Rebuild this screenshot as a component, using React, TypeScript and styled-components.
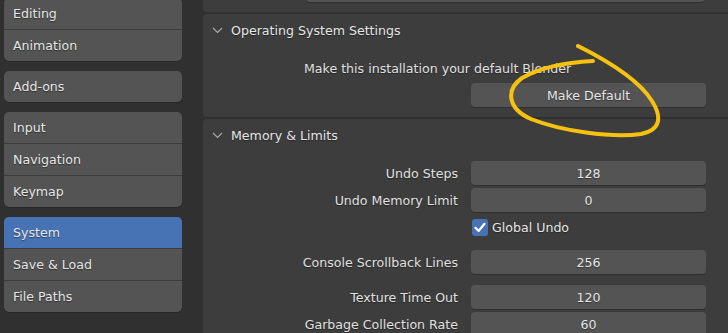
import React, { FC } from 'react';
import styled, { createGlobalStyle } from 'styled-components';

const GlobalStyle = createGlobalStyle`
  html, body {
    margin: 0;
    padding: 0;
    background: #303030;
  }
  body {
    color: #e6e6e6;
    font-family: "DejaVu Sans", "Noto Sans", sans-serif;
    font-size: 12.6px;
  }
`;

const Window = styled.div`
  display: flex;
  height: 333px;
  overflow: hidden;
  position: relative;
  width: 728px;
`;

const Sidebar = styled.nav`
  box-sizing: border-box;
  display: flex;
  flex: 0 0 203px;
  flex-direction: column;
  gap: 10px;
  padding: 0 21px 0 4px;
`;

const Group = styled.div<{ $first?: boolean }>`
  background: #545454;
  border-radius: 5px;
  box-shadow: 0 1px 0 rgba(0, 0, 0, 0.2);
  margin-top: ${(p) => (p.$first ? '-2px' : '0')};
  overflow: hidden;
`;

const NavItem = styled.div<{ $active?: boolean }>`
  align-items: center;
  background: ${(p) => (p.$active ? '#4772b3' : 'transparent')};
  display: flex;
  height: 31px;
  padding-left: 9px;
  text-shadow: 0 1px 1px rgba(0, 0, 0, 0.45);

  & + & {
    border-top: 1px solid #3d3d3d;
  }
`;

const Main = styled.main`
  display: flex;
  flex: 1;
  flex-direction: column;
  gap: 2px;
  min-width: 0;
`;

const Panel = styled.section<{ $stub?: boolean }>`
  background: #3d3d3d;
  border-radius: 4px 0 0 4px;
  margin-right: -8px;
  margin-top: ${(p) => (p.$stub ? '-30px' : '0')};
  padding-bottom: 10px;
  padding-top: ${(p) => (p.$stub ? '8px' : '0')};
`;

const Header = styled.div`
  align-items: center;
  display: flex;
  height: 32px;
  padding-left: 9px;
  text-shadow: 0 1px 1px rgba(0, 0, 0, 0.4);

  svg {
    margin-right: 8px;
  }
`;

const Body = styled.div`
  padding-top: 7px;
`;

const Row = styled.div<{ $spaced?: boolean }>`
  align-items: center;
  column-gap: 13px;
  display: grid;
  grid-template-columns: 255px 235px;
  height: 24px;
  margin-top: ${(p) => (p.$spaced ? '11px' : '3px')};
`;

const Label = styled.span`
  color: #e0e0e0;
  text-align: right;
  text-shadow: 0 1px 1px rgba(0, 0, 0, 0.4);
  white-space: nowrap;
`;

const Note = styled.div`
  align-items: center;
  color: #e0e0e0;
  display: flex;
  height: 24px;
  margin-top: 3px;
  padding-left: 101px;
  text-shadow: 0 1px 1px rgba(0, 0, 0, 0.4);
  white-space: nowrap;
`;

const Field = styled.div`
  align-items: center;
  background: #545454;
  border-radius: 4px;
  box-shadow: 0 1px 0 rgba(0, 0, 0, 0.22);
  display: flex;
  height: 24px;
  justify-content: center;
  text-shadow: 0 1px 1px rgba(0, 0, 0, 0.4);
`;

const WideField = styled(Field)`
  margin-left: 103px;
  width: 399px;
`;

const CheckLine = styled.label`
  align-items: center;
  display: flex;
  gap: 4px;
  padding-left: 1px;
  text-shadow: 0 1px 1px rgba(0, 0, 0, 0.4);
`;

const Box = styled.span`
  align-items: center;
  background: #4772b3;
  border-radius: 3px;
  display: inline-flex;
  height: 17px;
  justify-content: center;
  width: 16px;
`;

const Scribble = styled.svg`
  left: 0;
  pointer-events: none;
  position: absolute;
  top: 0;
`;

const Chevron: FC = () => (
  <svg width="11" height="7" viewBox="0 0 11 7">
    <path d="M1 1 L5.5 5.5 L10 1" fill="none" stroke="#a8a8a8" strokeWidth="1.2" />
  </svg>
);

const Check: FC = () => (
  <svg width="12" height="11" viewBox="0 0 12 11">
    <path d="M1.5 5.8 L4.6 9 L10.5 1.8" fill="none" stroke="#fff" strokeWidth="2.2" strokeLinecap="round" strokeLinejoin="round" />
  </svg>
);

const groups = [
  [{ name: 'Editing' }, { name: 'Animation' }],
  [{ name: 'Add-ons' }],
  [{ name: 'Input' }, { name: 'Navigation' }, { name: 'Keymap' }],
  [{ name: 'System', active: true }, { name: 'Save & Load' }, { name: 'File Paths' }],
];

const App: FC = () => {
  return (
    <>
      <GlobalStyle />
      <Window>
        <Sidebar>
          {groups.map((g, i) => (
            <Group key={i} $first={i === 0}>
              {g.map((item) => (
                <NavItem key={item.name} $active={'active' in item && item.active}>
                  {item.name}
                </NavItem>
              ))}
            </Group>
          ))}
        </Sidebar>
        <Main>
          <Panel $stub>
            <WideField />
          </Panel>
          <Panel>
            <Header>
              <Chevron />
              Operating System Settings
            </Header>
            <Body>
              <Note>Make this installation your default Blender</Note>
              <Row>
                <span />
                <Field>Make Default</Field>
              </Row>
            </Body>
          </Panel>
          <Panel>
            <Header>
              <Chevron />
              Memory &amp; Limits
            </Header>
            <Body>
              <Row>
                <Label>Undo Steps</Label>
                <Field>128</Field>
              </Row>
              <Row>
                <Label>Undo Memory Limit</Label>
                <Field>0</Field>
              </Row>
              <Row>
                <span />
                <CheckLine>
                  <Box>
                    <Check />
                  </Box>
                  Global Undo
                </CheckLine>
              </Row>
              <Row $spaced>
                <Label>Console Scrollback Lines</Label>
                <Field>256</Field>
              </Row>
              <Row $spaced>
                <Label>Texture Time Out</Label>
                <Field>120</Field>
              </Row>
              <Row>
                <Label>Garbage Collection Rate</Label>
                <Field>60</Field>
              </Row>
            </Body>
          </Panel>
        </Main>
        <Scribble width="728" height="333" viewBox="0 0 728 333">
          <path
            d="M578 46 C608 61 639 80 652 101 C662 117 661 130 641 134 C611 138 561 131 531 119 C508 109 505 90 522 78 C543 66 573 62 593 61"
            fill="none"
            stroke="#f6c20f"
            strokeWidth="4"
            strokeLinecap="round"
            strokeLinejoin="round"
          />
        </Scribble>
      </Window>
    </>
  );
};

export default App;
